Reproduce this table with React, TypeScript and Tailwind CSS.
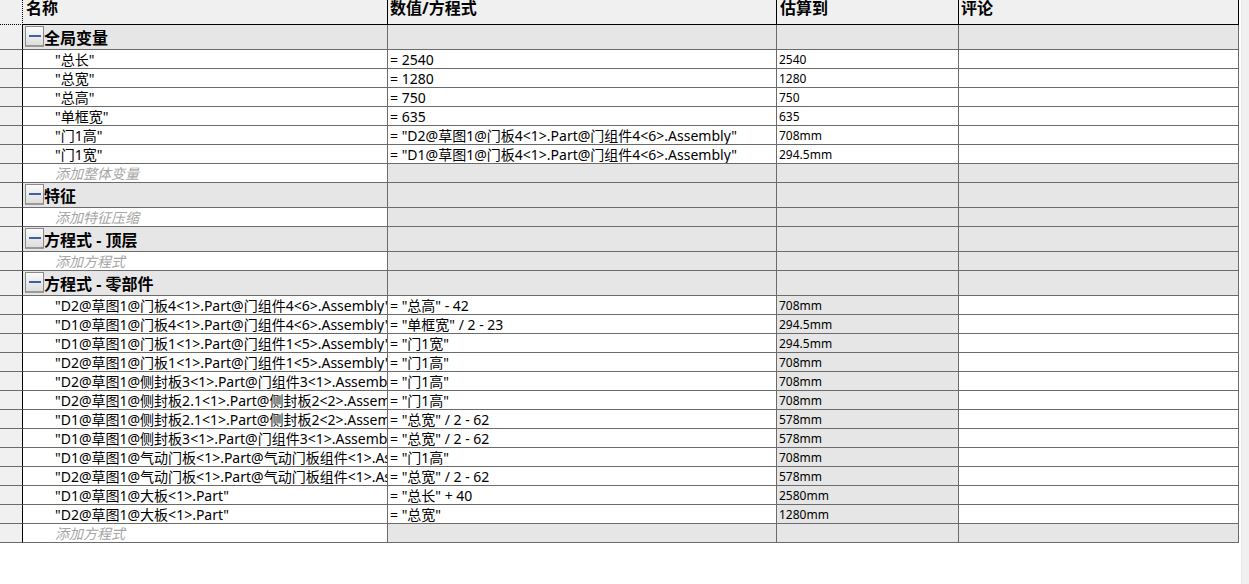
import React from 'react'

const line = 'border-[#6b6b6b]'
const font = { fontFamily: '"Noto Sans", "Noto Sans CJK SC", sans-serif' }

type Row =
  | { kind: 'group'; title: string }
  | { kind: 'add'; text: string }
  | { kind: 'data'; name: string; value: string; est: string; grayEst?: boolean }

const rows: Row[] = [
  { kind: 'group', title: '全局变量' },
  { kind: 'data', name: '"总长"', value: '= 2540', est: '2540' },
  { kind: 'data', name: '"总宽"', value: '= 1280', est: '1280' },
  { kind: 'data', name: '"总高"', value: '= 750', est: '750' },
  { kind: 'data', name: '"单框宽"', value: '= 635', est: '635' },
  { kind: 'data', name: '"门1高"', value: '= "D2@草图1@门板4<1>.Part@门组件4<6>.Assembly"', est: '708mm' },
  { kind: 'data', name: '"门1宽"', value: '= "D1@草图1@门板4<1>.Part@门组件4<6>.Assembly"', est: '294.5mm' },
  { kind: 'add', text: '添加整体变量' },
  { kind: 'group', title: '特征' },
  { kind: 'add', text: '添加特征压缩' },
  { kind: 'group', title: '方程式 - 顶层' },
  { kind: 'add', text: '添加方程式' },
  { kind: 'group', title: '方程式 - 零部件' },
  { kind: 'data', name: '"D2@草图1@门板4<1>.Part@门组件4<6>.Assembly"', value: '= "总高" - 42', est: '708mm', grayEst: true },
  { kind: 'data', name: '"D1@草图1@门板4<1>.Part@门组件4<6>.Assembly"', value: '= "单框宽" / 2 - 23', est: '294.5mm', grayEst: true },
  { kind: 'data', name: '"D1@草图1@门板1<1>.Part@门组件1<5>.Assembly"', value: '= "门1宽"', est: '294.5mm', grayEst: true },
  { kind: 'data', name: '"D2@草图1@门板1<1>.Part@门组件1<5>.Assembly"', value: '= "门1高"', est: '708mm', grayEst: true },
  { kind: 'data', name: '"D2@草图1@侧封板3<1>.Part@门组件3<1>.Assembly"', value: '= "门1高"', est: '708mm', grayEst: true },
  { kind: 'data', name: '"D2@草图1@侧封板2.1<1>.Part@侧封板2<2>.Assembly"', value: '= "门1高"', est: '708mm', grayEst: true },
  { kind: 'data', name: '"D1@草图1@侧封板2.1<1>.Part@侧封板2<2>.Assembly"', value: '= "总宽" / 2 - 62', est: '578mm', grayEst: true },
  { kind: 'data', name: '"D1@草图1@侧封板3<1>.Part@门组件3<1>.Assembly"', value: '= "总宽" / 2 - 62', est: '578mm', grayEst: true },
  { kind: 'data', name: '"D1@草图1@气动门板<1>.Part@气动门板组件<1>.Assembly"', value: '= "门1高"', est: '708mm', grayEst: true },
  { kind: 'data', name: '"D2@草图1@气动门板<1>.Part@气动门板组件<1>.Assembly"', value: '= "总宽" / 2 - 62', est: '578mm', grayEst: true },
  { kind: 'data', name: '"D1@草图1@大板<1>.Part"', value: '= "总长" + 40', est: '2580mm', grayEst: true },
  { kind: 'data', name: '"D2@草图1@大板<1>.Part"', value: '= "总宽"', est: '1280mm', grayEst: true },
  { kind: 'add', text: '添加方程式' },
]

function MinusBox() {
  return (
    <div className="ml-[2px] mt-[1px] flex h-[21px] w-[19px] shrink-0 items-center justify-center border border-[#8a8a8a] border-b-2 border-b-[#9a9a9a] bg-gradient-to-b from-[#fafafa] to-[#dedede]">
      <div className="h-[2px] w-[12px] bg-[#3f5fa8]" />
    </div>
  )
}

function Gutter() {
  return <div className={`w-[23px] shrink-0 border-r border-r-black border-b ${line} bg-[#f0f0f0]`} />
}

function TableRow({ row }: { row: Row }) {
  if (row.kind === 'group') {
    return (
      <div className="flex h-[25px]">
        <Gutter />
        <div className={`flex w-[365px] border-r border-b ${line} bg-[#e6e6e6]`}>
          <MinusBox />
          <span className="pt-[5px] text-[16px] font-bold leading-4 text-black">{row.title}</span>
        </div>
        <div className={`w-[389px] border-r border-b ${line} bg-[#e6e6e6]`} />
        <div className={`w-[182px] border-r border-b ${line} bg-[#e6e6e6]`} />
        <div className={`w-[280px] border-r border-b ${line} bg-[#e6e6e6]`} />
      </div>
    )
  }
  if (row.kind === 'add') {
    return (
      <div className="flex h-[19px]">
        <Gutter />
        <div className={`w-[365px] overflow-hidden whitespace-nowrap border-r border-b ${line} bg-white pl-[32px] pt-[1px] text-[14px] italic leading-[17px] text-[#a6a6a6]`}>
          {row.text}
        </div>
        <div className={`w-[389px] border-r border-b ${line} bg-[#e6e6e6]`} />
        <div className={`w-[182px] border-r border-b ${line} bg-[#e6e6e6]`} />
        <div className={`w-[280px] border-r border-b ${line} bg-[#e6e6e6]`} />
      </div>
    )
  }
  return (
    <div className="flex h-[19px]">
      <Gutter />
      <div className={`w-[365px] overflow-hidden whitespace-nowrap border-r border-b ${line} bg-white pl-[32px] pt-[1px] text-[14px] leading-[17px] text-black`}>
        {row.name}
      </div>
      <div className={`w-[389px] overflow-hidden whitespace-pre border-r border-b ${line} bg-white pl-[2px] pt-[1px] text-[14px] leading-[17px] text-black`}>
        {row.value}
      </div>
      <div
        className={`w-[182px] overflow-hidden whitespace-nowrap border-r border-b ${line} pl-[2px] pt-[1px] text-[12px] leading-[17px] text-black ${
          row.grayEst ? 'bg-[#e6e6e6]' : 'bg-white'
        }`}
      >
        {row.est}
      </div>
      <div className={`w-[280px] border-r border-b ${line} bg-white`} />
    </div>
  )
}

export default function App() {
  return (
    <div className="flex h-[584px] w-[1249px] overflow-hidden bg-white" style={font}>
      <div className="flex w-[1239px] flex-col">
        {/* header */}
        <div className="flex h-[25px] bg-[#f0f0f0] text-[16px] font-bold leading-4 text-black">
          <div className="w-[23px] border-r border-b border-dotted border-black" />
          <div className="w-[365px] border-r border-b border-black pl-[3px]">名称</div>
          <div className="w-[389px] border-r border-b border-black pl-[2px]">数值/方程式</div>
          <div className="w-[182px] border-r border-b border-black pl-[3px]">估算到</div>
          <div className="w-[280px] border-r border-b border-black pl-[2px]">评论</div>
        </div>
        {rows.map((row, i) => (
          <TableRow key={i} row={row} />
        ))}
      </div>
      <div className="w-[2px] bg-white" />
      <div className="flex-1 border-l border-[#e8e8e8] bg-[#f0f0f0]" />
    </div>
  )
}
